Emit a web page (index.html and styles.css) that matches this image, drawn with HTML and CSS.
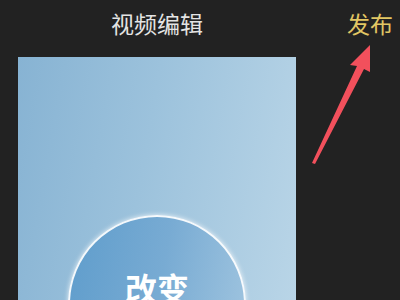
FILE: index.html
```html
<!DOCTYPE html>
<html lang="zh-CN">
<head>
    <meta charset="UTF-8">
    <meta name="viewport" content="width=device-width, initial-scale=1.0">
    <title>视频编辑</title>
    <link rel="stylesheet" href="styles.css">
</head>
<body>
    <div class="screen">
        <div class="topbar">
            <h1 class="title">视频编辑</h1>
        </div>
        <div class="publish">发布</div>

        <div class="preview">
            <div class="circle">
                <p class="circleText">改变</p>
            </div>
        </div>

        <svg class="arrow" width="400" height="300" viewBox="0 0 400 300">
            <polygon points="370,45 370,72 364,69 315,164 312,163 357,66 350,65" fill="#f2505c"/>
        </svg>
    </div>
</body>
</html>
```

FILE: styles.css
```css
body {
    margin: 0;
    background-color: #222222;
    font-family: 'Noto Sans CJK SC', 'Noto Sans', sans-serif;
    overflow: hidden;
}

.screen {
    position: relative;
    display: grid;
    grid-template-columns: 18px 278px 1fr;
    grid-template-rows: 57px 243px;
    width: 400px;
    height: 300px;
}

.topbar {
    grid-column: 2;
    grid-row: 1;
    display: flex;
    justify-content: center;
}

.title {
    margin: 0;
    padding-top: 8px;
    font-size: 23px;
    font-weight: normal;
    line-height: 30px;
    color: #e4e4e4;
}

.publish {
    grid-column: 3;
    grid-row: 1;
    justify-self: end;
    padding-top: 8px;
    padding-right: 7px;
    font-size: 23px;
    line-height: 30px;
    color: #e2c764;
}

.preview {
    grid-column: 2;
    grid-row: 2;
    display: flex;
    justify-content: center;
    align-items: flex-start;
    background: linear-gradient(100deg, #87b3d3 0%, #9cc2dc 45%, #b9d5e7 100%);
    overflow: hidden;
}

.circle {
    flex: none;
    box-sizing: border-box;
    width: 178px;
    height: 178px;
    margin-top: 158px;
    border: 2px solid rgba(255, 255, 255, 0.92);
    border-radius: 50%;
    box-shadow: 0 0 5px rgba(255, 255, 255, 0.8);
    background: linear-gradient(100deg, #5f9dcc 0%, #78abd3 50%, #a2c6e0 100%);
    display: flex;
    justify-content: center;
}

.circleText {
    margin: 0;
    padding-top: 50px;
    font-size: 32px;
    font-weight: bold;
    line-height: 40px;
    color: #ffffff;
}

.arrow {
    position: absolute;
    left: 0;
    top: 0;
}
```
